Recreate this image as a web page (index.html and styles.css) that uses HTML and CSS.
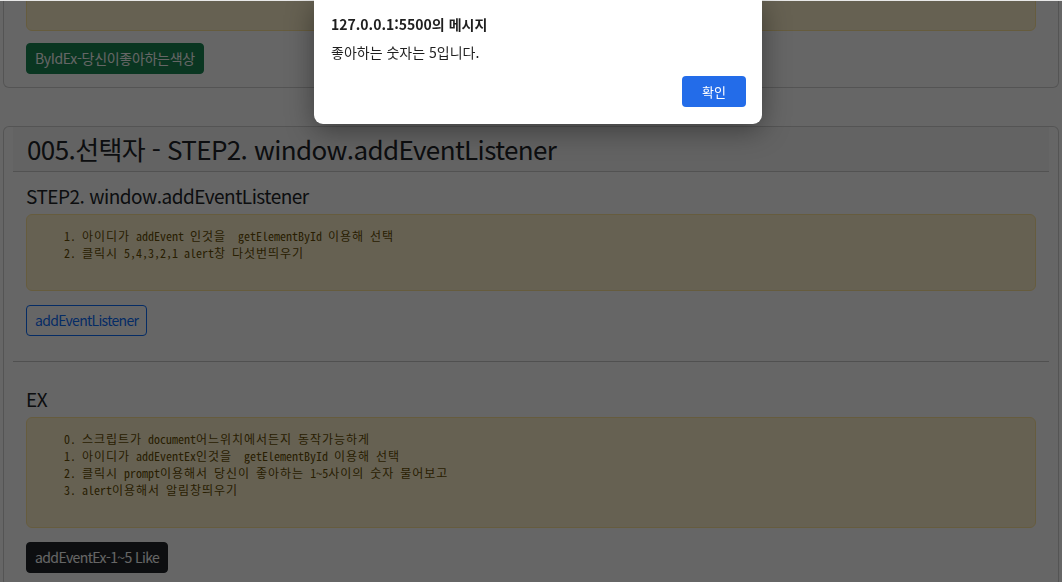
FILE: index.html
```html
<!DOCTYPE html>
<html lang="ko">
<head>
<meta charset="utf-8">
<title>005.선택자</title>
<link rel="stylesheet" href="styles.css">
</head>
<body>
<main class="page">
  <section class="card card-first">
    <div class="card-inner">
      <div class="card-body">
        <div class="note note-cut"></div>
        <button class="btn btn-success">ByIdEx-당신이좋아하는색상</button>
      </div>
    </div>
  </section>

  <section class="card">
    <div class="card-inner">
      <div class="card-header"><h3 class="card-title">005.선택자 - STEP2. window.addEventListener</h3></div>
      <div class="card-body">
        <h5 class="sub-title">STEP2. window.addEventListener</h5>
        <div class="note"><pre class="note-text">    1. <span class="ko">아이디가</span> addEvent <span class="ko">인것을</span>  getElementById <span class="ko">이용해</span> <span class="ko">선택</span>
    2. <span class="ko">클릭시</span> 5,4,3,2,1 alert<span class="ko">창</span> <span class="ko">다섯번띄우기</span></pre></div>
        <button class="btn btn-outline-primary">addEventListener</button>
      </div>
      <hr class="divider">
      <div class="card-body">
        <h4 class="sub-title ex-title">EX</h4>
        <div class="note"><pre class="note-text">    0. <span class="ko">스크립트가</span> document<span class="ko">어느위치에서든지</span> <span class="ko">동작가능하게</span>
    1. <span class="ko">아이디가</span> addEventEx<span class="ko">인것을</span>  getElementById <span class="ko">이용해</span> <span class="ko">선택</span>
    2. <span class="ko">클릭시</span> prompt<span class="ko">이용해서</span> <span class="ko">당신이</span> <span class="ko">좋아하는</span> 1~5<span class="ko">사이의</span> <span class="ko">숫자</span> <span class="ko">물어보고</span>
    3. alert<span class="ko">이용해서</span> <span class="ko">알림창띄우기</span></pre></div>
        <button class="btn btn-dark">addEventEx-1~5 Like</button>
      </div>
    </div>
  </section>
</main>

<div class="overlay"></div>

<div class="dialog" role="alertdialog">
  <div class="dialog-title">127.0.0.1:5500의 메시지</div>
  <div class="dialog-message">좋아하는 숫자는 5입니다.</div>
  <div class="dialog-actions">
    <button class="dialog-btn">확인</button>
  </div>
</div>
</body>
</html>
```

FILE: styles.css
```css
* {
  box-sizing: border-box;
}

html, body {
  margin: 0;
  padding: 0;
  background: #ffffff;
  overflow: hidden;
}

body {
  font-family: "Noto Sans CJK KR", "Noto Sans", sans-serif;
  color: #212529;
  font-size: 16px;
  line-height: 1.5;
}

.page {
  padding: 0 3px;
  margin-top: -50px;
}

.card {
  border: 1px solid rgba(0, 0, 0, 0.175);
  border-radius: 6px;
  background: #ffffff;
  margin-bottom: 38px;
}

.card-inner {
  padding: 0 9px;
}

.card-header {
  padding: 5px 14px;
  background: rgba(33, 37, 41, 0.03);
  border-bottom: 1px solid rgba(0, 0, 0, 0.175);
}

.card-title {
  margin: 0;
  font-size: 26px;
  letter-spacing: -0.6px;
  font-weight: 400;
  line-height: 34px;
}

.card-body {
  padding: 13px;
}

.sub-title {
  margin: 0 0 7px;
  font-size: 19px;
  letter-spacing: -0.5px;
  font-weight: 400;
  line-height: 22px;
}

.ex-title {
  line-height: 24px;
  margin-bottom: 6px;
}

.note {
  background: #fff3cd;
  border: 1px solid #ffe69c;
  border-radius: 6px;
  color: #664d03;
  padding: 12px 13px 29px;
  margin-bottom: 14px;
}

.note-cut {
  height: 67px;
  margin-bottom: 12px;
}

.note-text {
  margin: 0;
  font-family: "Noto Sans Mono CJK KR", "DejaVu Sans Mono", monospace;
  font-size: 12px;
  line-height: 17px;
  color: #664d03;
}

.ko {
  letter-spacing: 0.96px;
}

.btn {
  display: inline-block;
  font-family: inherit;
  font-size: 14px;
  letter-spacing: -0.5px;
  line-height: 21px;
  padding: 4px 8px;
  border: 1px solid transparent;
  border-radius: 4px;
  background: transparent;
  cursor: pointer;
}

.btn-success {
  background: #198754;
  border-color: #198754;
  color: #ffffff;
  letter-spacing: -0.3px;
}

.btn-outline-primary {
  color: #0d6efd;
  border-color: #0d6efd;
  letter-spacing: -0.7px;
}

.btn-dark {
  background: #212529;
  border-color: #212529;
  color: #ffffff;
  letter-spacing: -0.6px;
}

.divider {
  margin: 12px 0;
  border: 0;
  border-top: 1px solid #212529;
  opacity: 0.25;
}

.overlay {
  position: fixed;
  inset: 0;
  background: rgba(0, 0, 0, 0.6);
  border-top: 1px solid #e8e8e8;
}

.dialog {
  position: fixed;
  left: 314px;
  top: 0;
  width: 448px;
  height: 124px;
  background: #ffffff;
  border-radius: 0 0 9px 9px;
  box-shadow: 0 6px 28px rgba(0, 0, 0, 0.4);
  padding: 14px 16px 17px 17px;
  font-family: "Noto Sans CJK KR", "Noto Sans", sans-serif;
  color: #1f1f1f;
  display: flex;
  flex-direction: column;
}

.dialog-title {
  font-size: 14px;
  font-weight: 700;
  line-height: 20px;
}

.dialog-message {
  margin-top: 9px;
  font-size: 14px;
  line-height: 18px;
}

.dialog-actions {
  margin-top: auto;
  display: flex;
  justify-content: flex-end;
}

.dialog-btn {
  width: 64px;
  height: 31px;
  border: 0;
  border-radius: 4px;
  background: #236ce9;
  color: #ffffff;
  font-family: inherit;
  font-size: 13px;
  padding: 0;
}
```
